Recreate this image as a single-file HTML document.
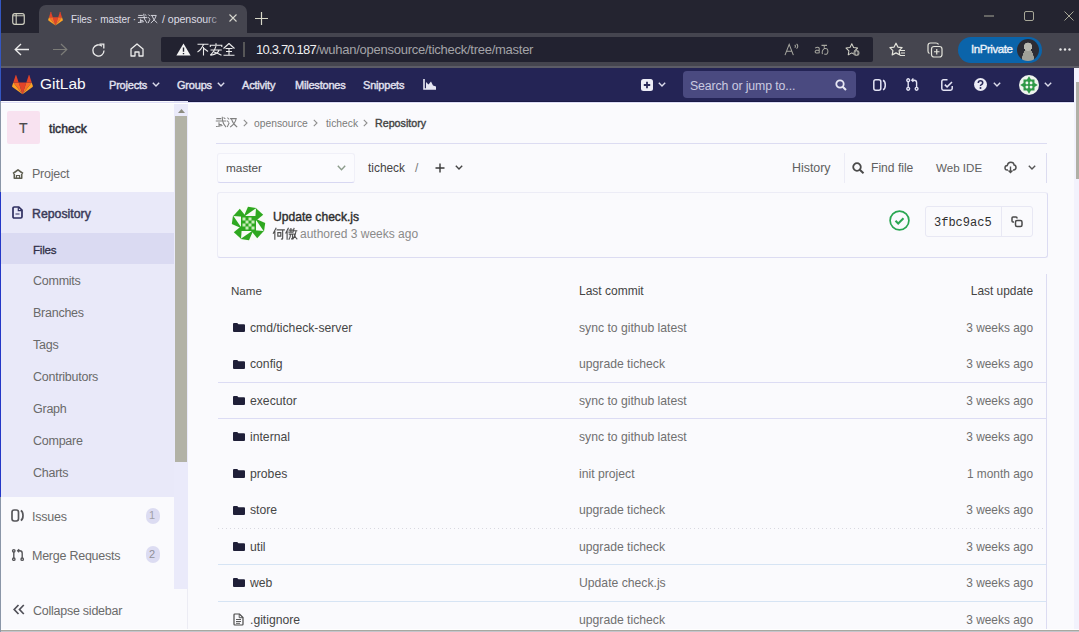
<!DOCTYPE html>
<html><head><meta charset="utf-8">
<style>
*{box-sizing:border-box;margin:0;padding:0}
html,body{width:1079px;height:632px;overflow:hidden;background:#fafafd;font-family:"Liberation Sans",sans-serif;position:relative}
.a{position:absolute;white-space:nowrap}
svg{position:absolute;overflow:visible}
/* browser chrome */
#tabstrip{left:0;top:0;width:1079px;height:33px;background:#242430}
#toolbar{left:0;top:33px;width:1079px;height:33px;background:#45454f}
#tbline{left:0;top:66px;width:1079px;height:2px;background:#5c5c66}
#tab{left:39px;top:5px;width:208px;height:29px;background:#45454f;border-radius:7px 7px 0 0}
#addr{left:161px;top:37px;width:712px;height:25px;background:#222230;border-radius:2px}
#navbar{left:0;top:68px;width:1074px;height:34px;background:#242455;border-bottom:1px solid #1a1a46}
.nav{color:#e2e2f0;font-size:11px;letter-spacing:-0.2px;-webkit-text-stroke:0.4px #e2e2f0;top:79px}
#search{left:683px;top:71px;width:173px;height:27px;background:#4a4a80;border-radius:4px}
/* sidebar */
#sidebar{left:0;top:101px;width:188px;height:531px;background:#fafafd;border-right:1px solid #ececf4}
#repo-sec{left:1px;top:192px;width:174px;height:305px;background:#e9e9f9}
#files-row{left:1px;top:233px;width:174px;height:31px;background:#dadaf2}
#sbtrack{left:174px;top:101px;width:14px;height:488px;background:#eaeafa}
#sbthumb{left:175px;top:116px;width:12px;height:346px;background:#b2b2a6}
.sl{color:#6a6a6a;font-size:12.5px;letter-spacing:-0.25px}
/* content */
.t{color:#5f5f5f;font-size:12px}
.d{color:#2e2e2e}
.hl{background:#dedef0}
.row-line{left:218px;width:829px;height:1px;background:#e2e2f0}
.fold{width:12px;height:9px;background:#1f1f38;border-radius:1px}
</style></head>
<body>
<!-- left window border -->
<div class="a" style="left:0;top:0;width:1px;height:101px;background:#3456c0;z-index:50"></div>
<div class="a" style="left:0;top:101px;width:1px;height:531px;background:#8a96a8;z-index:50"></div>
<div class="a" style="left:0;top:192px;width:1px;height:305px;background:#2438c8;z-index:50"></div>
<div class="a" id="tabstrip"></div>
<div class="a" id="toolbar"></div>
<div class="a" id="tab"></div>
<div class="a" id="addr"></div>
<div class="a" id="tbline"></div>

<!-- ===== browser chrome details ===== -->
<svg style="left:12px;top:13px" width="13" height="12" viewBox="0 0 14 13"><rect x="0.75" y="0.75" width="12.5" height="11.5" rx="2.2" fill="none" stroke="#cfcfc0" stroke-width="1.3"/><line x1="4.5" y1="1" x2="4.5" y2="12" stroke="#cfcfc0" stroke-width="1.2"/><line x1="1" y1="3" x2="13" y2="3" stroke="#cfcfc0" stroke-width="1"/></svg>
<svg style="left:48px;top:12px" width="15" height="14" viewBox="0 0 36 34"><path d="M18 33 L24.6 12.7 H11.4 Z" fill="#e24329"/><path d="M18 33 L11.4 12.7 H2.2 Z" fill="#fc6d26"/><path d="M2.2 12.7 L0.2 18.9 a1.4 1.4 0 0 0 .5 1.5 L18 33 Z" fill="#fca326"/><path d="M2.2 12.7 H11.4 L7.4 0.5 a.7.7 0 0 0 -1.3 0 Z" fill="#e24329"/><path d="M18 33 L24.6 12.7 H33.8 Z" fill="#fc6d26"/><path d="M33.8 12.7 L35.8 18.9 a1.4 1.4 0 0 1 -.5 1.5 L18 33 Z" fill="#fca326"/><path d="M33.8 12.7 H24.6 L28.6 0.5 a.7.7 0 0 1 1.3 0 Z" fill="#e24329"/></svg>
<div class="a" style="left:71px;top:14px;font-size:10px;color:#dedee6;letter-spacing:-0.1px">Files · master · </div>
<svg style="left:138px;top:14px" width="19" height="9" viewBox="0 0 21.11111111111111 10"><g stroke="#dedee6" stroke-width="1.0" fill="none" stroke-linecap="square"><path transform="translate(0.00 0)" d="M0.8 1.6h4M0.3 4h9.4M6.3 0.3q0 6 3.4 9.4M8 0.8l1 .8M3 5.8v3.6M3 7.4h2.2M0.5 9.4l5.5-.8"/><path transform="translate(11.11 0)" d="M0.8 1l1 1M0.5 4l1 1M0.4 9.6l1.6-3.4M3.6 1.6h5.6q-1.2 5.2-5.6 8.2M4.6 2.4q1.6 5 5.2 7.3"/></g></svg>
<div class="a" style="left:162px;top:13px;font-size:10.6px;color:#dedee6;letter-spacing:-0.05px">/ opensourc</div>
<div class="a" style="left:205px;top:6px;width:22px;height:24px;background:linear-gradient(90deg,rgba(69,69,79,0),#45454f)"></div>
<svg style="left:229px;top:14px" width="8" height="8" viewBox="0 0 8 8"><path d="M0.5 0.5L7.5 7.5M7.5 0.5L0.5 7.5" stroke="#d8d8d0" stroke-width="1.1"/></svg>
<svg style="left:255px;top:12px" width="13" height="13" viewBox="0 0 13 13"><path d="M6.5 0v13M0 6.5h13" stroke="#d8d8c8" stroke-width="1.2"/></svg>
<svg style="left:984px;top:15px" width="10" height="2" viewBox="0 0 10 2"><path d="M0 1h10" stroke="#a8a898" stroke-width="1"/></svg>
<svg style="left:1024px;top:11px" width="10" height="10" viewBox="0 0 10 10"><rect x="0.5" y="0.5" width="9" height="9" rx="1.5" fill="none" stroke="#a8a898" stroke-width="1"/></svg>
<svg style="left:1064px;top:11px" width="10" height="10" viewBox="0 0 10 10"><path d="M0.5 0.5L9.5 9.5M9.5 0.5L0.5 9.5" stroke="#a8a898" stroke-width="1"/></svg>

<svg style="left:14px;top:43px" width="16" height="13" viewBox="0 0 16 13"><path d="M15 6.5H1.5M7 1L1.2 6.5L7 12" stroke="#ececec" stroke-width="1.3" fill="none"/></svg>
<svg style="left:52px;top:43px" width="16" height="13" viewBox="0 0 16 13"><path d="M1 6.5h13.5M9 1l5.8 5.5L9 12" stroke="#7c7c78" stroke-width="1.2" fill="none"/></svg>
<svg style="left:91px;top:43px" width="15" height="15" viewBox="0 0 15 15"><path d="M13 7.5A5.6 5.6 0 1 1 11 3.2" stroke="#ececec" stroke-width="1.3" fill="none"/><path d="M8.5 1.2h4.3v4.3" stroke="#ececec" stroke-width="1.3" fill="none"/></svg>
<svg style="left:130px;top:43px" width="14" height="14" viewBox="0 0 14 14"><path d="M1 13V6L7 1l6 5v7H9V9H5v4Z" stroke="#ececec" stroke-width="1.3" fill="none" stroke-linejoin="round"/></svg>
<svg style="left:176px;top:43px" width="15" height="13" viewBox="0 0 15 13"><path d="M7.5 0.5L14.6 12.6H0.4Z" fill="#f4f4f4"/><path d="M7.5 4.5v4.3M7.5 10v1.2" stroke="#222230" stroke-width="1.4"/></svg>
<svg style="left:197px;top:43px" width="38" height="13" viewBox="0 0 38 13"><g stroke="#ececec" stroke-width="1.1" fill="none"><path d="M0.5 1.2h11M6.5 1.5Q4 7 0.5 9M6.5 4v8.5M7 5.5l4 3"/><path d="M19 0.3v1.8M13.3 4V2.2h11.5V4M19 3.2q-2 6-5.8 9M13.5 7h11.3M22 7q-1 4-8 5.2M17 9q4 1.5 7.5 3.2"/><path d="M32 0.5L26.5 5.5M32 0.5L37.5 5.5M28.5 5.5h7M32 5.5v6.5M29 8.5h6M26.5 12.2h11"/></g></svg>
<svg style="left:243px;top:42px" width="2" height="15" viewBox="0 0 2 15"><path d="M1 0v15" stroke="#8c8c80" stroke-width="1"/></svg>
<div class="a" style="left:256px;top:42px;font-size:13px;color:#f0f0f0;letter-spacing:-0.8px">10.3.70.187<span style="color:#a4a4a8;letter-spacing:-0.26px">/wuhan/opensource/ticheck/tree/master</span></div>
<!-- right toolbar icons -->
<svg style="left:784px;top:43px" width="15" height="13" viewBox="0 0 16 14"><g stroke="#a8a8a0" stroke-width="1.1" fill="none"><path d="M1 13L5.5 1.5L10 13M2.8 9h5.5"/><path d="M11.5 2q1.5 1.5 0 3M13.5 1q2.5 2.5 0 5"/></g></svg>
<svg style="left:814px;top:44px" width="15" height="11" viewBox="0 0 16 12"><g stroke="#a8a8a0" stroke-width="1.1" fill="none"><path d="M1 4.5q3-2 4.5 0V10M5.5 7q-4-1-4.5 1.5 0 2 4.5 1"/><path d="M8 1.5h6M11 1v3M9 11q-1-4 2-6 4-1 4 3t-4 3"/></g></svg>
<svg style="left:845px;top:42px" width="17" height="16" viewBox="0 0 20 17"><path d="M8 1.2l2.1 4.3 4.7.7-3.4 3.3.8 4.7L8 11.9l-4.2 2.3.8-4.7L1.2 6.2l4.7-.7Z" stroke="#d4d4c8" stroke-width="1.2" fill="none" stroke-linejoin="round"/><circle cx="13.5" cy="12" r="3.6" fill="#9c9c98"/><path d="M13.5 10v4M11.5 12h4" stroke="#222230" stroke-width="1"/></svg>
<svg style="left:889px;top:42px" width="17" height="15" viewBox="0 0 17 15"><path d="M7 1.2l1.9 3.9 4.2.6-3 3 .7 4.2L7 10.9l-3.8 2 .7-4.2-3-3 4.2-.6Z" stroke="#e4e4dc" stroke-width="1.2" fill="none" stroke-linejoin="round"/><path d="M11 8.5h5M12 11h4M11 13.5h5" stroke="#e4e4dc" stroke-width="1.1"/></svg>
<svg style="left:927px;top:42px" width="16" height="16" viewBox="0 0 16 16"><rect x="4.5" y="4.5" width="10.5" height="10.5" rx="2.5" stroke="#e4e4dc" stroke-width="1.2" fill="none"/><path d="M2.5 11.5q-1.5-.5-1.5-2.5V3.5Q1 1 3.5 1H9q2 0 2.5 1.5" stroke="#e4e4dc" stroke-width="1.2" fill="none"/><path d="M9.75 7v5.5M7 9.75h5.5" stroke="#e4e4dc" stroke-width="1.2"/></svg>
<div class="a" style="left:958px;top:37px;width:84px;height:26px;background:#0b64aa;border-radius:13px"></div>
<div class="a" style="left:971px;top:43px;font-size:11.5px;color:#eef4fa;letter-spacing:-0.45px;-webkit-text-stroke:0.35px #eef4fa">InPrivate</div>
<div class="a" style="left:1017px;top:39px;width:22px;height:22px;border-radius:50%;background:radial-gradient(circle at 50% 35%,#b8b8b0 0 22%,transparent 24%),radial-gradient(ellipse at 50% 100%,#a0a098 0 38%,transparent 40%),#2c2c34"></div>
<svg style="left:1059px;top:48px" width="12" height="3" viewBox="0 0 12 3"><circle cx="1.5" cy="1.5" r="1.2" fill="#e8e8e8"/><circle cx="6" cy="1.5" r="1.2" fill="#e8e8e8"/><circle cx="10.5" cy="1.5" r="1.2" fill="#e8e8e8"/></svg>

<div class="a" id="navbar"></div>

<div class="a" id="search"></div>
<div class="a" style="left:0;top:102px;width:1074px;height:1px;background:#dcdcf6;z-index:5"></div>
<div class="a" style="left:0;top:103px;width:1074px;height:1px;background:#ffffff;z-index:5"></div>

<!-- ===== gitlab navbar ===== -->
<svg style="left:12px;top:75px" width="21" height="20" viewBox="0 0 36 34"><path d="M18 33 L24.6 12.7 H11.4 Z" fill="#e24329"/><path d="M18 33 L11.4 12.7 H2.2 Z" fill="#fc6d26"/><path d="M2.2 12.7 L0.2 18.9 a1.4 1.4 0 0 0 .5 1.5 L18 33 Z" fill="#fca326"/><path d="M2.2 12.7 H11.4 L7.4 0.5 a.7.7 0 0 0 -1.3 0 Z" fill="#e24329"/><path d="M18 33 L24.6 12.7 H33.8 Z" fill="#fc6d26"/><path d="M33.8 12.7 L35.8 18.9 a1.4 1.4 0 0 1 -.5 1.5 L18 33 Z" fill="#fca326"/><path d="M33.8 12.7 H24.6 L28.6 0.5 a.7.7 0 0 1 1.3 0 Z" fill="#e24329"/></svg>
<div class="a" style="left:40px;top:75px;font-size:15.5px;color:#fafafa">GitLab</div>
<div class="a nav" style="left:109px">Projects</div>
<svg style="left:152px;top:82px" width="8" height="5" viewBox="0 0 8 5"><path d="M0.8 0.8L4 4L7.2 0.8" stroke="#dcdcec" stroke-width="1.4" fill="none"/></svg>
<div class="a nav" style="left:177px">Groups</div>
<svg style="left:217px;top:82px" width="8" height="5" viewBox="0 0 8 5"><path d="M0.8 0.8L4 4L7.2 0.8" stroke="#dcdcec" stroke-width="1.4" fill="none"/></svg>
<div class="a nav" style="left:242px">Activity</div>
<div class="a nav" style="left:295px">Milestones</div>
<div class="a nav" style="left:363px">Snippets</div>
<svg style="left:423px;top:79px" width="13" height="11" viewBox="0 0 13 11"><path d="M1 0v10h12" stroke="#e6e6f2" stroke-width="1.6" fill="none"/><path d="M3 10V3l2.5 2.5L8 2.5l2 4 3 1V10Z" fill="#e6e6f2"/></svg>

<svg style="left:641px;top:79px" width="12" height="12" viewBox="0 0 12 12"><rect width="12" height="12" rx="2.5" fill="#ececf6"/><path d="M6 2.8v6.4M2.8 6h6.4" stroke="#282859" stroke-width="1.8"/></svg>
<svg style="left:658px;top:82px" width="8" height="5" viewBox="0 0 8 5"><path d="M0.8 0.8L4 4L7.2 0.8" stroke="#dcdcec" stroke-width="1.4" fill="none"/></svg>
<div class="a" style="left:690px;top:79px;font-size:12.3px;color:#cacae0;letter-spacing:-0.1px">Search or jump to...</div>
<svg style="left:835px;top:79px" width="12" height="12" viewBox="0 0 12 12"><circle cx="5" cy="5" r="3.7" stroke="#e8e8f4" stroke-width="1.8" fill="none"/><path d="M7.7 7.7L11 11" stroke="#e8e8f4" stroke-width="2"/></svg>
<svg style="left:873px;top:79px" width="13" height="12" viewBox="0 0 13 12"><rect x="0.8" y="0.8" width="7" height="10.4" rx="2" stroke="#e4e4f4" stroke-width="1.5" fill="none"/><path d="M10 1.2q2.3 1 2.3 4.8T10 10.8" stroke="#e4e4f4" stroke-width="1.5" fill="none"/></svg>
<svg style="left:906px;top:78px" width="13" height="13" viewBox="0 0 13 13"><g stroke="#e4e4f4" stroke-width="1.4" fill="none"><circle cx="2.2" cy="2.2" r="1.4"/><circle cx="2.2" cy="10.8" r="1.4"/><circle cx="10.6" cy="10.8" r="1.4"/><path d="M2.2 3.6v5.8M10.6 9.4V4.6Q10.6 2.2 8.2 2.2H6"/><path d="M7.4 0.6L5.8 2.2L7.4 3.8"/></g></svg>
<svg style="left:941px;top:79px" width="12" height="12" viewBox="0 0 12 12"><path d="M6.5 0.8H2.5Q0.8 0.8 0.8 2.5v7q0 1.7 1.7 1.7h7q1.7 0 1.7-1.7V7" stroke="#e4e4f4" stroke-width="1.5" fill="none"/><path d="M3.8 5.6l2.3 2.3L11 3" stroke="#e4e4f4" stroke-width="1.5" fill="none"/></svg>
<svg style="left:974px;top:78px" width="13" height="13" viewBox="0 0 13 13"><circle cx="6.5" cy="6.5" r="6.5" fill="#ececf6"/><path d="M4.3 5q0-2.2 2.2-2.2T8.7 4.8q0 1.2-1.2 1.8T6.5 8" stroke="#282859" stroke-width="1.6" fill="none"/><circle cx="6.5" cy="10" r="1" fill="#282859"/></svg>
<svg style="left:993px;top:82px" width="8" height="5" viewBox="0 0 8 5"><path d="M0.8 0.8L4 4L7.2 0.8" stroke="#dcdcec" stroke-width="1.4" fill="none"/></svg>
<svg style="left:1019px;top:75px" width="20" height="20" viewBox="0 0 20 20"><circle cx="10" cy="10" r="10" fill="#eef4ee"/><path d="M10 1.2L12 4.5 15.5 4.5 15.5 8 18.8 10 15.5 12 15.5 15.5 12 15.5 10 18.8 8 15.5 4.5 15.5 4.5 12 1.2 10 4.5 8 4.5 4.5 8 4.5Z" fill="#2f9a48"/><g fill="#f0f6f0"><rect x="6.6" y="6.6" width="2.6" height="2.6" rx="0.8"/><rect x="10.8" y="6.6" width="2.6" height="2.6" rx="0.8"/><rect x="6.6" y="10.8" width="2.6" height="2.6" rx="0.8"/><rect x="10.8" y="10.8" width="2.6" height="2.6" rx="0.8"/></g></svg>
<svg style="left:1044px;top:82px" width="8" height="5" viewBox="0 0 8 5"><path d="M0.8 0.8L4 4L7.2 0.8" stroke="#dcdcec" stroke-width="1.4" fill="none"/></svg>


<div class="a" id="sidebar"></div>
<div class="a" id="repo-sec"></div>
<div class="a" id="files-row"></div>
<div class="a" id="sbtrack"></div>
<div class="a" id="sbthumb"></div>

<!-- ===== sidebar content ===== -->
<div class="a" style="left:7px;top:111px;width:33px;height:33px;background:#f8e2f0;border-radius:2px"></div>
<div class="a" style="left:19px;top:120px;font-size:14px;color:#4a4a4a;-webkit-text-stroke:0.2px #4a4a4a">T</div>
<div class="a" style="left:49px;top:122px;font-size:12.2px;color:#2e2e38;-webkit-text-stroke:0.45px #2e2e38">ticheck</div>
<svg style="left:12px;top:169px" width="12" height="10" viewBox="0 0 12 10"><path d="M1 4.5L6 0.8l5 3.7M2.3 3.8V9.2h7.4V3.8" stroke="#5e5e50" stroke-width="1.6" fill="none" stroke-linejoin="round"/><path d="M4.5 9V6.5h3V9" stroke="#5e5e50" stroke-width="1.2" fill="none"/></svg>
<div class="a sl" style="left:32px;top:167px">Project</div>
<svg style="left:12px;top:206px" width="11" height="13" viewBox="0 0 11 13"><path d="M2.3 1h4.5l3.2 3.2v6.5q0 1.3-1.3 1.3H2.3Q1 12 1 10.7V2.3Q1 1 2.3 1Z" stroke="#2e2e60" stroke-width="1.7" fill="none"/><path d="M3.5 8h4M6.3 1.5v3.2h3.2" stroke="#2e2e60" stroke-width="1.2" fill="none"/></svg>
<div class="a" style="left:32px;top:207px;font-size:12.3px;color:#3a3a58;-webkit-text-stroke:0.45px #3a3a58">Repository</div>
<div class="a sl" style="left:33px;top:243px;font-size:11.6px;color:#303048;-webkit-text-stroke:0.3px #303048">Files</div>
<div class="a sl" style="left:33px;top:274px">Commits</div>
<div class="a sl" style="left:33px;top:306px">Branches</div>
<div class="a sl" style="left:33px;top:338px">Tags</div>
<div class="a sl" style="left:33px;top:370px">Contributors</div>
<div class="a sl" style="left:33px;top:402px">Graph</div>
<div class="a sl" style="left:33px;top:434px">Compare</div>
<div class="a sl" style="left:33px;top:466px">Charts</div>
<svg style="left:11px;top:509px" width="13" height="13" viewBox="0 0 13 13"><rect x="1" y="1" width="6.5" height="11" rx="2.2" stroke="#56565a" stroke-width="1.7" fill="none"/><path d="M9.8 1.5q2.2 1 2.2 5t-2.2 5" stroke="#56565a" stroke-width="1.7" fill="none"/></svg>
<div class="a sl" style="left:32px;top:510px">Issues</div>
<div class="a" style="left:146px;top:508px;width:14px;height:16px;border-radius:7px;background:#dcdcf2"></div>
<div class="a" style="left:149px;top:509px;font-size:11px;color:#a0a0a8">1</div>
<svg style="left:12px;top:549px" width="12" height="12" viewBox="0 0 12 12"><g stroke="#56565a" stroke-width="1.4" fill="none"><circle cx="1.8" cy="1.8" r="1.2"/><circle cx="1.8" cy="10.2" r="1.2"/><circle cx="10.2" cy="10.2" r="1.2"/><path d="M1.8 3v6M10.2 9V4.2Q10.2 1.8 7.8 1.8H5.8"/><path d="M7.2 0.3L5.7 1.8L7.2 3.3"/></g></svg>
<div class="a sl" style="left:32px;top:549px">Merge Requests</div>
<div class="a" style="left:146px;top:546px;width:14px;height:17px;border-radius:7px;background:#dcdcf2"></div>
<div class="a" style="left:149px;top:548px;font-size:11px;color:#909098">2</div>
<svg style="left:13px;top:604px" width="12" height="11" viewBox="0 0 12 11"><path d="M5.5 1L1.2 5.5L5.5 10M10.8 1L6.5 5.5L10.8 10" stroke="#505058" stroke-width="1.7" fill="none"/></svg>
<div class="a sl" style="left:33px;top:604px">Collapse sidebar</div>
<!-- sidebar scrollbar arrow -->
<svg style="left:178px;top:109px" width="7" height="4" viewBox="0 0 7 4"><path d="M0 4L3.5 0L7 4Z" fill="#8c8c80"/></svg>



<!-- ===== main content ===== -->
<svg style="left:216px;top:117px" width="21" height="10" viewBox="0 0 21.0 10"><g stroke="#808080" stroke-width="1.05" fill="none" stroke-linecap="square"><path transform="translate(0.00 0)" d="M0.8 1.6h4M0.3 4h9.4M6.3 0.3q0 6 3.4 9.4M8 0.8l1 .8M3 5.8v3.6M3 7.4h2.2M0.5 9.4l5.5-.8"/><path transform="translate(11.00 0)" d="M0.8 1l1 1M0.5 4l1 1M0.4 9.6l1.6-3.4M3.6 1.6h5.6q-1.2 5.2-5.6 8.2M4.6 2.4q1.6 5 5.2 7.3"/></g></svg>
<svg style="left:243px;top:119px" width="5" height="8" viewBox="0 0 5 8"><path d="M0.8 0.8L4 4L0.8 7.2" stroke="#8e8e8e" stroke-width="1.1" fill="none"/></svg>
<div class="a t" style="left:254px;top:118px;font-size:10.3px;color:#7a7a7a">opensource</div>
<svg style="left:313px;top:119px" width="5" height="8" viewBox="0 0 5 8"><path d="M0.8 0.8L4 4L0.8 7.2" stroke="#8e8e8e" stroke-width="1.1" fill="none"/></svg>
<div class="a t" style="left:326px;top:118px;font-size:10.3px;color:#7a7a7a">ticheck</div>
<svg style="left:363px;top:119px" width="5" height="8" viewBox="0 0 5 8"><path d="M0.8 0.8L4 4L0.8 7.2" stroke="#8e8e8e" stroke-width="1.1" fill="none"/></svg>
<div class="a t" style="left:375px;top:117px;font-size:10.7px;color:#444;-webkit-text-stroke:0.4px #444">Repository</div>
<div class="a" style="left:216px;top:143px;width:831px;height:1px;background:#dcdcf2"></div>

<!-- tree controls -->
<div class="a" style="left:217px;top:153px;width:138px;height:30px;border:1px solid #f0f0f8;border-bottom-color:#d8d8f2;border-radius:3px;background:#fbfbfe"></div>
<div class="a t" style="left:226px;top:161px;font-size:11.8px;color:#4e4e4e">master</div>
<svg style="left:337px;top:165px" width="9" height="6" viewBox="0 0 9 6"><path d="M0.8 0.8L4.5 4.8L8.2 0.8" stroke="#8c9c8c" stroke-width="1.4" fill="none"/></svg>
<div class="a t" style="left:368px;top:161px;font-size:11.9px;color:#444">ticheck</div>
<div class="a t" style="left:415px;top:161px;font-size:12px;color:#777">/</div>
<svg style="left:435px;top:163px" width="10" height="10" viewBox="0 0 10 10"><path d="M5 0.5v9M0.5 5h9" stroke="#3a3a3a" stroke-width="1.4"/></svg>
<svg style="left:455px;top:165px" width="8" height="5" viewBox="0 0 8 5"><path d="M0.8 0.8L4 4L7.2 0.8" stroke="#444" stroke-width="1.4" fill="none"/></svg>

<div class="a t" style="left:792px;top:161px;font-size:12.4px;color:#606060">History</div>
<div class="a" style="left:844px;top:153px;width:1px;height:30px;background:#ececf6"></div>
<svg style="left:852px;top:162px" width="13" height="12" viewBox="0 0 13 12"><circle cx="5" cy="5" r="3.8" stroke="#4a4a4a" stroke-width="1.8" fill="none"/><path d="M7.8 7.8L11.5 11.3" stroke="#4a4a4a" stroke-width="2"/></svg>
<div class="a t" style="left:871px;top:161px;font-size:12.1px;color:#606060">Find file</div>
<div class="a t" style="left:936px;top:161px;font-size:11.6px;color:#606060">Web IDE</div>
<svg style="left:1004px;top:161px" width="13" height="12" viewBox="0 0 13 12"><path d="M4 9H3.2Q1 9 1 6.8t2.3-2.3Q3.8 1.2 6.8 1.2t3.3 2.8Q12 4.3 12 6.5T9.5 9H9" stroke="#505050" stroke-width="1.5" fill="none"/><path d="M6.5 5.5v6M4.5 9.5l2 2 2-2" stroke="#505050" stroke-width="1.4" fill="none"/></svg>
<svg style="left:1028px;top:165px" width="8" height="5" viewBox="0 0 8 5"><path d="M0.8 0.8L4 4L7.2 0.8" stroke="#555" stroke-width="1.4" fill="none"/></svg>
<div class="a" style="left:1046px;top:153px;width:1px;height:30px;background:#dcdcf0"></div>

<!-- commit box -->
<div class="a" style="left:217px;top:192px;width:831px;height:66px;border:1px solid #ececf6;border-right-color:#dcdcf2;border-bottom-color:#dcdcf2;border-radius:3px"></div>
<svg style="left:231px;top:206px" width="35" height="35" viewBox="0 0 35 35"><defs><g id="bl"><path d="M12.5 11L17 0.8L25.5 2Z"/><path d="M2.2 10L8.8 2.8L15.5 11Z"/></g></defs><circle cx="17.5" cy="17.5" r="17.5" fill="#f8fbf6"/><g fill="#2ea820"><use href="#bl"/><use href="#bl" transform="rotate(90 17.5 17.5)"/><use href="#bl" transform="rotate(180 17.5 17.5)"/><use href="#bl" transform="rotate(270 17.5 17.5)"/><rect x="10" y="10" width="15" height="15"/></g><g fill="#c8ecb8"><rect x="11.5" y="11.5" width="3" height="3"/><rect x="17.5" y="11.5" width="3" height="3"/><rect x="14.5" y="14.5" width="3" height="3"/><rect x="20.5" y="14.5" width="3" height="3"/><rect x="11.5" y="17.5" width="3" height="3"/><rect x="17.5" y="17.5" width="3" height="3"/><rect x="14.5" y="20.5" width="3" height="3"/><rect x="20.5" y="20.5" width="3" height="3"/></g></svg>
<div class="a" style="left:273px;top:210px;font-size:12.1px;color:#2e2e2e;-webkit-text-stroke:0.4px #2e2e2e">Update check.js</div>
<svg style="left:273px;top:228px" width="24.0" height="11.5" viewBox="0 0 20.869565217391305 10"><g stroke="#505050" stroke-width="1.0" fill="none" stroke-linecap="square"><path transform="translate(0.00 0)" d="M2.6 0.3L0.3 4.6M1.6 3v6.8M3.6 1.6h6.2M8.4 1.6v7.4q0 .8-1 .6M4.2 4h2.6v3H4.2Z"/><path transform="translate(10.87 0)" d="M2.4 0.3L0.3 4.4M1.4 3v6.8M3.2 1.8h3M4.7 0.4v3.2M3 3.6h3.4M3.3 5.3h2.9M4.3 5.3q0 3-1.2 4.4M6.1 5.3v3.6q0 .6-.8.6M7.4 0.3l-.8 3M7 2.4h2.8M9.2 2.4q-.5 4.5-2.8 7.2M7.4 5.2q1 3 2.5 4.3"/></g></svg>
<div class="a t" style="left:300px;top:227px;font-size:12px;color:#8a8a8a">authored 3 weeks ago</div>
<svg style="left:889px;top:210px" width="21" height="21" viewBox="0 0 21 21"><circle cx="10.5" cy="10.5" r="9.4" stroke="#2aa652" stroke-width="1.7" fill="none"/><path d="M6.5 10.8l2.7 2.7 5.3-5.3" stroke="#2aa652" stroke-width="2" fill="none"/></svg>
<div class="a" style="left:925px;top:206px;width:108px;height:31px;border:1px solid #e8e8f4;border-radius:3px"></div>
<div class="a" style="left:1001px;top:206px;width:1px;height:31px;background:#e8e8f4"></div>
<div class="a" style="left:934px;top:216px;font-family:'Liberation Mono',monospace;font-size:12px;color:#303030">3fbc9ac5</div>
<svg style="left:1011px;top:216px" width="12" height="11" viewBox="0 0 12 11"><path d="M6 2.5V2Q6 1 5 1H2Q1 1 1 2v3q0 1 1 1h1" stroke="#4a4a4a" stroke-width="1.5" fill="none"/><rect x="4.5" y="4.5" width="6.5" height="6" rx="1.5" stroke="#4a4a4a" stroke-width="1.5" fill="none"/></svg>


<!-- table -->
<div class="a" style="left:218px;top:382px;width:829px;height:1px;background:#dcdcf4"></div>
<div class="a" style="left:218px;top:418px;width:829px;height:1px;background:#dcdcf4"></div>
<div class="a" style="left:218px;top:528px;width:829px;height:1px;background:repeating-linear-gradient(90deg,#d8d8e0 0 1px,transparent 1px 4px)"></div>
<div class="a" style="left:218px;top:564px;width:829px;height:1px;background:#d6e4f4"></div>
<div class="a" style="left:218px;top:601px;width:829px;height:1px;background:#d6e4f4"></div>

<div class="a" style="left:1046px;top:274px;width:1px;height:358px;background:#dcdcf2"></div>
<div class="a" style="left:231px;top:284px;font-size:11.6px;color:#444">Name</div>
<div class="a" style="left:579px;top:284px;font-size:12px;color:#444">Last commit</div>
<div class="a" style="left:1033px;top:284px;font-size:11.9px;color:#444;transform:translateX(-100%)">Last update</div>
<svg style="left:233px;top:323px" width="12" height="9" viewBox="0 0 12 9"><path d="M0 1q0-1 1-1h3.2l1.3 1.3H11q1 0 1 1V8q0 1-1 1H1Q0 9 0 8Z" fill="#1f1f38"/></svg>
<div class="a" style="left:250px;top:320.5px;font-size:12.2px;color:#464646">cmd/ticheck-server</div>
<div class="a" style="left:579px;top:320.5px;font-size:12.2px;color:#707070">sync to github latest</div>
<div class="a" style="left:1033px;top:320.5px;font-size:11.9px;color:#707070;transform:translateX(-100%)">3 weeks ago</div>
<svg style="left:233px;top:360px" width="12" height="9" viewBox="0 0 12 9"><path d="M0 1q0-1 1-1h3.2l1.3 1.3H11q1 0 1 1V8q0 1-1 1H1Q0 9 0 8Z" fill="#1f1f38"/></svg>
<div class="a" style="left:250px;top:357px;font-size:12.2px;color:#464646">config</div>
<div class="a" style="left:579px;top:357px;font-size:12.2px;color:#707070">upgrade ticheck</div>
<div class="a" style="left:1033px;top:357px;font-size:11.9px;color:#707070;transform:translateX(-100%)">3 weeks ago</div>
<svg style="left:233px;top:396px" width="12" height="9" viewBox="0 0 12 9"><path d="M0 1q0-1 1-1h3.2l1.3 1.3H11q1 0 1 1V8q0 1-1 1H1Q0 9 0 8Z" fill="#1f1f38"/></svg>
<div class="a" style="left:250px;top:393.5px;font-size:12.2px;color:#464646">executor</div>
<div class="a" style="left:579px;top:393.5px;font-size:12.2px;color:#707070">sync to github latest</div>
<div class="a" style="left:1033px;top:393.5px;font-size:11.9px;color:#707070;transform:translateX(-100%)">3 weeks ago</div>
<svg style="left:233px;top:432px" width="12" height="9" viewBox="0 0 12 9"><path d="M0 1q0-1 1-1h3.2l1.3 1.3H11q1 0 1 1V8q0 1-1 1H1Q0 9 0 8Z" fill="#1f1f38"/></svg>
<div class="a" style="left:250px;top:430px;font-size:12.2px;color:#464646">internal</div>
<div class="a" style="left:579px;top:430px;font-size:12.2px;color:#707070">sync to github latest</div>
<div class="a" style="left:1033px;top:430px;font-size:11.9px;color:#707070;transform:translateX(-100%)">3 weeks ago</div>
<svg style="left:233px;top:469px" width="12" height="9" viewBox="0 0 12 9"><path d="M0 1q0-1 1-1h3.2l1.3 1.3H11q1 0 1 1V8q0 1-1 1H1Q0 9 0 8Z" fill="#1f1f38"/></svg>
<div class="a" style="left:250px;top:466.5px;font-size:12.2px;color:#464646">probes</div>
<div class="a" style="left:579px;top:466.5px;font-size:12.2px;color:#707070">init project</div>
<div class="a" style="left:1033px;top:466.5px;font-size:11.9px;color:#707070;transform:translateX(-100%)">1 month ago</div>
<svg style="left:233px;top:506px" width="12" height="9" viewBox="0 0 12 9"><path d="M0 1q0-1 1-1h3.2l1.3 1.3H11q1 0 1 1V8q0 1-1 1H1Q0 9 0 8Z" fill="#1f1f38"/></svg>
<div class="a" style="left:250px;top:503px;font-size:12.2px;color:#464646">store</div>
<div class="a" style="left:579px;top:503px;font-size:12.2px;color:#707070">upgrade ticheck</div>
<div class="a" style="left:1033px;top:503px;font-size:11.9px;color:#707070;transform:translateX(-100%)">3 weeks ago</div>
<svg style="left:233px;top:542px" width="12" height="9" viewBox="0 0 12 9"><path d="M0 1q0-1 1-1h3.2l1.3 1.3H11q1 0 1 1V8q0 1-1 1H1Q0 9 0 8Z" fill="#1f1f38"/></svg>
<div class="a" style="left:250px;top:539.5px;font-size:12.2px;color:#464646">util</div>
<div class="a" style="left:579px;top:539.5px;font-size:12.2px;color:#707070">upgrade ticheck</div>
<div class="a" style="left:1033px;top:539.5px;font-size:11.9px;color:#707070;transform:translateX(-100%)">3 weeks ago</div>
<svg style="left:233px;top:578px" width="12" height="9" viewBox="0 0 12 9"><path d="M0 1q0-1 1-1h3.2l1.3 1.3H11q1 0 1 1V8q0 1-1 1H1Q0 9 0 8Z" fill="#1f1f38"/></svg>
<div class="a" style="left:250px;top:576px;font-size:12.2px;color:#464646">web</div>
<div class="a" style="left:579px;top:576px;font-size:12.2px;color:#707070">Update check.js</div>
<div class="a" style="left:1033px;top:576px;font-size:11.9px;color:#707070;transform:translateX(-100%)">3 weeks ago</div>
<svg style="left:233px;top:613px" width="11" height="13" viewBox="0 0 11 13"><path d="M1.8 1h4.7l3.5 3.5v6.7q0 .8-.8.8H1.8Q1 12 1 11.2V1.8Q1 1 1.8 1Z" stroke="#4a4a4a" stroke-width="1.2" fill="none"/><path d="M3 6.5h5M3 8.5h5M3 10.3h4M6.2 1.2v3.5h3.5" stroke="#4a4a4a" stroke-width="0.9" fill="none"/></svg>
<div class="a" style="left:250px;top:612.5px;font-size:12.2px;color:#464646">.gitignore</div>
<div class="a" style="left:579px;top:612.5px;font-size:12.2px;color:#707070">upgrade ticheck</div>
<div class="a" style="left:1033px;top:612.5px;font-size:11.9px;color:#707070;transform:translateX(-100%)">3 weeks ago</div>

<!-- page scrollbar -->
<div class="a" style="left:1074px;top:68px;width:5px;height:564px;background:#f2f2fc"></div>
<div class="a" style="left:1076px;top:82px;width:3px;height:97px;background:#b0b0a6"></div>
<!-- bottom line -->
<div class="a" style="left:0;top:629px;width:1079px;height:1px;background:#ffffff"></div>
<div class="a" style="left:0;top:630px;width:1079px;height:1px;background:#a8a8a0"></div>
<div class="a" style="left:0;top:631px;width:1079px;height:1px;background:#c4c4cc"></div>

</body></html>
